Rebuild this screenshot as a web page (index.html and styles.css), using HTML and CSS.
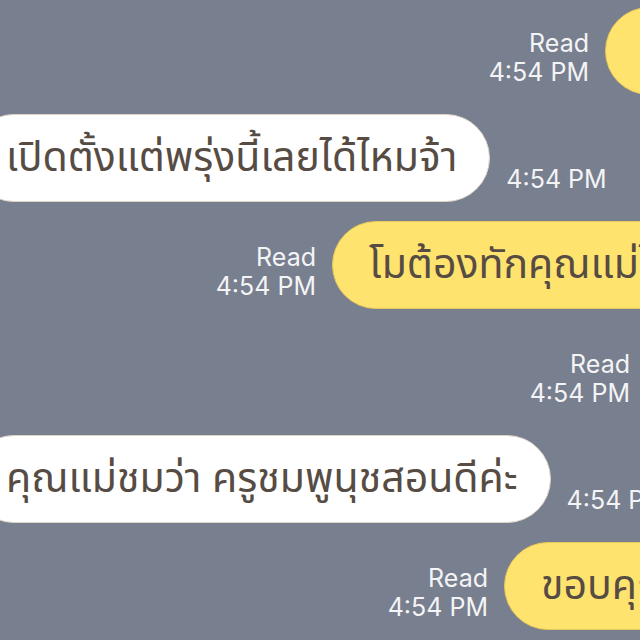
FILE: index.html
```html
<!DOCTYPE html>
<html lang="th">
<head>
<meta charset="utf-8">
<title>Chat</title>
<link rel="stylesheet" href="styles.css">
</head>
<body>
<div class="chat">
  <div class="row out r1">
    <div class="meta"><span>Read</span><span>4:54 PM</span></div>
    <div class="bubble yellow">ได้เลยค่ะคุณแม่</div>
  </div>
  <div class="row in">
    <div class="bubble white">เปิดตั้งแต่พรุ่งนี้เลยได้ไหมจ้า</div>
    <div class="meta"><span>4:54 PM</span></div>
  </div>
  <div class="row out r3">
    <div class="meta"><span>Read</span><span>4:54 PM</span></div>
    <div class="bubble yellow">โมต้องทักคุณแม่ไปก่อนนะคะ</div>
  </div>
  <div class="row out r4">
    <div class="meta"><span>Read</span><span>4:54 PM</span></div>
    <div class="bubble yellow">ค่ะ</div>
  </div>
  <div class="row in">
    <div class="bubble white">คุณแม่ชมว่า ครูชมพูนุชสอนดีค่ะ</div>
    <div class="meta"><span>4:54 PM</span></div>
  </div>
  <div class="row out r6">
    <div class="meta"><span>Read</span><span>4:54 PM</span></div>
    <div class="bubble yellow">ขอบคุณค่ะ</div>
  </div>
</div>
</body>
</html>
```
FILE: styles.css
```css
html, body {
  margin: 0;
  padding: 0;
  background: #787f8f;
  overflow: hidden;
  width: 640px;
  height: 640px;
}
.chat {
  display: flex;
  flex-direction: column;
  gap: 19px;
  padding-top: 7px;
  width: 640px;
}
.row {
  display: flex;
  align-items: flex-end;
  gap: 16px;
  white-space: nowrap;
}
.meta {
  display: flex;
  flex-direction: column;
  align-items: flex-end;
  font-family: Inter, "Liberation Sans", sans-serif;
  font-size: 25px;
  line-height: 29px;
  color: #f4f4f6;
  padding-bottom: 8px;
  flex-shrink: 0;
}
.out .meta { width: 120px; }
.r1 { padding-left: 469px; }
.r3 { padding-left: 196px; }
.r4 { padding-left: 510px; }
.r6 { padding-left: 368px; }
.bubble {
  flex-shrink: 0;
  box-sizing: border-box;
  height: 88px;
  border-radius: 44px;
  display: flex;
  align-items: center;
  font-family: "Noto Sans Thai", Thonburi, "Noto Sans", sans-serif;
  font-size: 41px;
  color: #574c43;
}
.yellow {
  background: #ffe36f;
  border: 1px solid #e8c75c;
  padding: 0 36px 0 36px;
}
.white {
  background: #ffffff;
  border: 1px solid #ddd4c4;
  margin-left: -30px;
  padding: 0 32px 0 35px;
}
```
